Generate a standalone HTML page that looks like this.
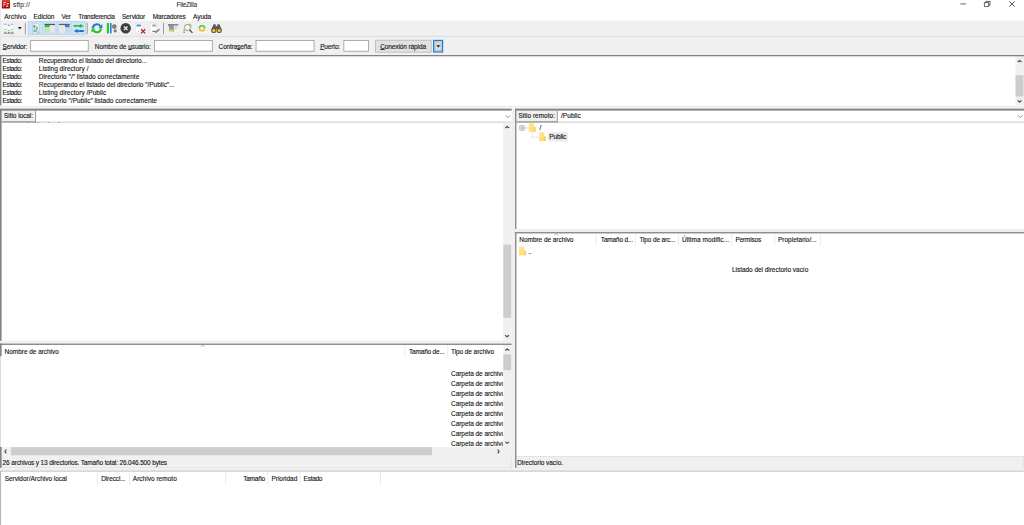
<!DOCTYPE html>
<html><head><meta charset="utf-8"><title>FileZilla</title>
<style>
*{margin:0;padding:0;box-sizing:border-box}
html,body{width:1024px;height:525px;overflow:hidden;background:#fff}
body{position:relative;font-family:"Liberation Sans",sans-serif;font-size:6.5px;color:#111;line-height:8px}
.a{position:absolute}
.t{position:absolute;white-space:nowrap;height:8px;line-height:8px;-webkit-text-stroke:0.12px #222}
.g{background:#f0f0f0}
.w{background:#fff}
.dk{background:#828282}
.in{position:absolute;background:#fff;border:0.9px solid #a3a3a3}
.sp{position:absolute;width:0.8px;background:#e3e3e3}
.th{background:#cdcdcd}
.ar{position:absolute;overflow:visible}
u{text-decoration:underline;text-decoration-thickness:0.45px;text-underline-offset:0.3px;text-decoration-color:#444}
svg{position:absolute;overflow:visible}
</style></head><body>
<!-- structure -->
<svg style="left:0;top:0" width="1024" height="525" viewBox="0 0 1024 525" shape-rendering="geometricPrecision">
<!-- toolbar + quickconnect background -->
<rect x="0" y="20.5" width="1024" height="35" fill="#f0f0f0"/>
<rect x="0" y="35.8" width="1024" height="0.9" fill="#dadada"/>
<rect x="0" y="0" width="0.8" height="55" fill="#e6e6e6"/>
<!-- quickconnect inputs -->
<rect x="30.2" y="40" width="58.5" height="11.7" fill="#a3a3a3"/>
<rect x="31.1" y="40.9" width="56.7" height="9.9" fill="#fff"/>
<rect x="154" y="40" width="58.8" height="11.7" fill="#a3a3a3"/>
<rect x="154.9" y="40.9" width="57" height="9.9" fill="#fff"/>
<rect x="255.6" y="40" width="58.9" height="11.7" fill="#a3a3a3"/>
<rect x="256.5" y="40.9" width="57.1" height="9.9" fill="#fff"/>
<rect x="343.4" y="40" width="25.5" height="11.7" fill="#a3a3a3"/>
<rect x="344.3" y="40.9" width="23.7" height="9.9" fill="#fff"/>
<rect x="375" y="39.8" width="56.6" height="12.8" fill="#b8b8b8"/>
<rect x="375.8" y="40.6" width="55" height="11.2" fill="#e1e1e1"/>
<rect x="433" y="39.8" width="10.2" height="12.8" fill="#1a80d9"/>
<rect x="434.2" y="41" width="7.8" height="10.4" fill="#dcdcdc"/>
<rect x="435" y="41.8" width="6.2" height="8.8" fill="none" stroke="#666" stroke-width="0.5" stroke-dasharray="0.6 0.6"/>
<path d="M436.3 45.2H440.3L438.3 47.4Z" fill="#222"/>
<!-- log pane -->
<rect x="1015.5" y="56.3" width="8.5" height="49.1" fill="#f0f0f0"/>
<rect x="1015.5" y="75.2" width="8" height="21.3" fill="#cdcdcd"/>
<!-- splitter below log -->
<rect x="0" y="105.6" width="1024" height="3.2" fill="#f0f0f0"/>
<!-- vertical splitter between local / remote -->
<rect x="511.7" y="108.8" width="3.4" height="362.5" fill="#f0f0f0"/>
<!-- LOCAL panel -->
<rect x="0" y="109.5" width="36" height="13.1" fill="#f0f0f0"/>
<rect x="36" y="121.6" width="475.7" height="1.1" fill="#cdcdcd"/>
<!-- local tree scrollbar -->
<rect x="503.3" y="122.6" width="8.4" height="218.2" fill="#f0f0f0"/>
<rect x="503.3" y="244.7" width="7.9" height="73.1" fill="#cdcdcd"/>
<!-- splitter local tree / list -->
<rect x="0" y="340.6" width="511.7" height="3.1" fill="#f0f0f0"/>
<rect x="0" y="356.2" width="1" height="91" fill="#dedede"/>
<!-- local list header separators -->
<rect x="404.6" y="344.9" width="0.8" height="12.8" fill="#e7e7e7"/>
<rect x="447.3" y="344.9" width="0.8" height="12.8" fill="#e7e7e7"/>
<!-- local list scrollbars -->
<rect x="503.3" y="344.9" width="8.4" height="110.9" fill="#f0f0f0"/>
<rect x="503.3" y="354.3" width="7.9" height="15.9" fill="#cdcdcd"/>
<rect x="0" y="447" width="503.4" height="8.8" fill="#f0f0f0"/>
<rect x="11" y="447.2" width="421" height="8.2" fill="#cdcdcd"/>
<!-- local status bar -->
<rect x="0" y="455.8" width="511.7" height="12" fill="#f0f0f0"/>
<rect x="1.6" y="467" width="510.1" height="0.8" fill="#e2e2e2"/>
<rect x="510.9" y="455.8" width="0.8" height="12" fill="#e2e2e2"/>
<!-- REMOTE panel -->
<rect x="515.1" y="109.5" width="42.7" height="13.1" fill="#f0f0f0"/>
<rect x="557.8" y="121.6" width="466.2" height="1.1" fill="#cdcdcd"/>
<!-- remote tree selection -->
<rect x="548" y="132.3" width="19.8" height="9" fill="#e8e8e8"/>
<!-- splitter remote tree / list -->
<rect x="515.1" y="229" width="508.9" height="3.2" fill="#f0f0f0"/>
<!-- remote header separators -->
<rect x="595.7" y="233.5" width="0.8" height="12.6" fill="#e7e7e7"/>
<rect x="635.3" y="233.5" width="0.8" height="12.6" fill="#e7e7e7"/>
<rect x="678.3" y="233.5" width="0.8" height="12.6" fill="#e7e7e7"/>
<rect x="731.5" y="233.5" width="0.8" height="12.6" fill="#e7e7e7"/>
<rect x="774.4" y="233.5" width="0.8" height="12.6" fill="#e7e7e7"/>
<rect x="819.9" y="233.5" width="0.8" height="12.6" fill="#e7e7e7"/>
<!-- remote status bar -->
<rect x="516.4" y="456" width="507.6" height="12.6" fill="#e2e2e2"/>
<rect x="517.2" y="456.8" width="506" height="11" fill="#f0f0f0"/>
<!-- band under panels -->
<rect x="0" y="467.8" width="1024" height="3.8" fill="#f0f0f0"/>
<rect x="0" y="470.6" width="1024" height="1" fill="#c0c5cb"/>
<!-- queue -->
<rect x="0" y="471.4" width="1.1" height="54" fill="#b4b7ba"/>
<rect x="97.2" y="472" width="0.8" height="13" fill="#e7e7e7"/>
<rect x="129.3" y="472" width="0.8" height="13" fill="#e7e7e7"/>
<rect x="225.3" y="472" width="0.8" height="13" fill="#e7e7e7"/>
<rect x="267.5" y="472" width="0.8" height="13" fill="#e7e7e7"/>
<rect x="299.6" y="472" width="0.8" height="13" fill="#e7e7e7"/>
<rect x="380" y="472" width="0.8" height="13" fill="#e7e7e7"/>
<!-- dark border lines (drawn last) -->
<rect x="0" y="55" width="1024" height="1.3" fill="#828282"/>
<rect x="0" y="55" width="1.4" height="50.4" fill="#828282"/>
<rect x="0" y="108.7" width="511.7" height="1.9" fill="#828282"/>
<rect x="0" y="108.8" width="1.6" height="232" fill="#828282"/>
<rect x="35" y="110.5" width="1" height="12.1" fill="#9e9e9e"/>
<rect x="1.6" y="121.3" width="34.4" height="1.3" fill="#8e8e8e"/>
<rect x="0" y="343.6" width="511.7" height="1.3" fill="#828282"/>
<rect x="0" y="343.6" width="1.6" height="12.6" fill="#828282"/>
<rect x="0" y="447" width="1.6" height="20.8" fill="#828282"/>
<rect x="515.1" y="108.7" width="508.9" height="1.9" fill="#828282"/>
<rect x="515.1" y="108.8" width="1.3" height="120.2" fill="#828282"/>
<rect x="556.8" y="110.5" width="1" height="12.1" fill="#9e9e9e"/>
<rect x="516.4" y="121.3" width="41.4" height="1.3" fill="#8e8e8e"/>
<rect x="515.1" y="232.1" width="508.9" height="1.3" fill="#828282"/>
<rect x="515.1" y="232.1" width="1.3" height="235.7" fill="#828282"/>
<!-- tiny ticks under local combo -->
<rect x="27.5" y="122.1" width="1.6" height="0.7" fill="#8a8a8a"/>
<rect x="37.6" y="122.1" width="1.6" height="0.7" fill="#8a8a8a"/>
<rect x="47.8" y="122.1" width="1.6" height="0.7" fill="#8a8a8a"/>
<rect x="58" y="122.1" width="1.6" height="0.7" fill="#8a8a8a"/>
</svg>
<!-- icons overlay -->
<svg style="left:0;top:0" width="1024" height="525" viewBox="0 0 1024 525" font-family="Liberation Sans, sans-serif">
<defs>
<linearGradient id="fzg" x1="0" y1="0" x2="0" y2="1"><stop offset="0" stop-color="#d04a4a"/><stop offset="0.45" stop-color="#bb1111"/><stop offset="1" stop-color="#a80000"/></linearGradient>
<linearGradient id="fold" x1="0" y1="0" x2="1" y2="1"><stop offset="0" stop-color="#ffe9a3"/><stop offset="1" stop-color="#ffd75e"/></linearGradient>
</defs>
<!-- title icon -->
<rect x="1.8" y="0" width="8.2" height="8.4" rx="0.6" fill="url(#fzg)"/>
<text x="3.1" y="7.1" font-size="7.2" font-style="italic" fill="#fff" textLength="5.8" lengthAdjust="spacingAndGlyphs">Fz</text>
<!-- window controls -->
<g stroke="#333" stroke-width="0.75" fill="none">
<path d="M960.4 3.9H966"/>
<path d="M984.4 2.6H988.6V6.5H984.4Z"/><path d="M985.8 2.6V1.4H990V5.2H988.6"/>
<path d="M1009.3 1.3L1014.6 6.6M1014.6 1.3L1009.3 6.6" stroke-width="0.85"/>
</g>

<!-- toolbar: site manager -->
<g>
<g stroke="#dcdcdc" stroke-width="0.3"><rect x="3.9" y="23.5" width="3.1" height="8" fill="#fff"/><rect x="7.3" y="24.3" width="3.1" height="8" fill="#fff"/><rect x="10.7" y="23.5" width="3.1" height="8" fill="#fff"/></g>
<rect x="4.4" y="23.7" width="2.1" height="1.4" rx="0.5" fill="#7db5ea"/><rect x="7.8" y="24.7" width="2.1" height="1.4" rx="0.5" fill="#5a9fe0"/><rect x="11.2" y="23.7" width="2.1" height="1.4" rx="0.5" fill="#7db5ea"/>
<rect x="4.3" y="28.9" width="2.3" height="1" fill="#86cf86"/><rect x="7.7" y="29.9" width="2.3" height="1" fill="#86cf86"/><rect x="11.1" y="28.9" width="2.3" height="1" fill="#86cf86"/>
<path d="M3.9 33.4L5.45 30.9L7 33.4ZM7.3 33.4L8.85 31.3L10.4 33.4ZM10.7 33.4L12.25 30.9L13.8 33.4Z" fill="#8e8e8e"/>
<path d="M3.6 33.4H14.1" stroke="#8a8a8a" stroke-width="0.6" fill="none"/>
</g>
<path d="M17.8 27.1H21.8L19.8 29.5Z" fill="#2a2a2a"/>
<!-- separators -->
<g stroke="#707070" stroke-width="0.65">
<path d="M25.3 22.8V34.2"/><path d="M87.25 22.8V34.2"/><path d="M163.5 22.8V34.2"/>
</g>
<!-- toggle group -->
<rect x="28" y="21.2" width="57.9" height="13.6" fill="#cbe3f7"/>
<g stroke="#b4d6f4" stroke-width="0.7" fill="none">
<rect x="28.2" y="21.4" width="57.5" height="13.2"/><path d="M42.4 21.4V34.6M56.8 21.4V34.6M71.2 21.4V34.6"/>
</g>
<!-- toggle 1: log doc -->
<g>
<path d="M32.5 23.7H37.3L39.2 25.6V33H32.5Z" fill="#f2f4f5" stroke="#b3babf" stroke-width="0.5"/>
<rect x="33.3" y="25.2" width="2" height="2.4" fill="#4f9be0"/>
<rect x="33.2" y="30.3" width="3.6" height="1.3" fill="#3f8edc"/>
<path d="M35.6 26.2L38 28.4L35.6 30.2" stroke="#35c13a" stroke-width="0.9" fill="none"/>
<path d="M33.4 28.9H35.4" stroke="#35c13a" stroke-width="0.7"/>
<path d="M36.2 27.4L37.4 29.3" stroke="#8d9499" stroke-width="0.9"/>
<rect x="37.2" y="31.6" width="1.6" height="0.8" fill="#35c13a"/>
</g>
<!-- toggle 2: local tree -->
<g>
<rect x="44.6" y="24" width="10.4" height="8.7" fill="#f4f4f4" stroke="#b9bec3" stroke-width="0.4"/>
<rect x="44.6" y="23.9" width="10.4" height="1.3" fill="#555"/>
<rect x="44.8" y="25.2" width="4.9" height="2.1" fill="#1fc026"/>
<rect x="44.8" y="27.6" width="4.9" height="5" fill="#bfe6b7"/>
<rect x="50.3" y="25.4" width="4.5" height="7.2" fill="#e6e6e6"/>
</g>
<!-- toggle 3: remote tree -->
<g>
<rect x="59" y="24" width="10.6" height="8.7" fill="#f4f4f4" stroke="#b9bec3" stroke-width="0.4"/>
<rect x="59" y="23.9" width="10.6" height="1.3" fill="#5e5e5e"/>
<rect x="64.9" y="25.2" width="4.6" height="2.1" fill="#2478cf"/>
<rect x="64.9" y="27.6" width="4.6" height="5" fill="#c9d9e6"/>
<rect x="59.2" y="25.4" width="5.2" height="7.2" fill="#e8e8e8"/>
</g>
<!-- toggle 4: transfer queue arrows -->
<g>
<path d="M73.6 25H80V24.1L83.8 25.9L80 27.7V26.8H73.6Z" fill="#22c22a"/>
<path d="M83.8 30.1H77.6V29.1L73.8 31L77.6 32.9V31.9H83.8Z" fill="#1f74cc"/>
<path d="M77.5 24.4V27.3M79 30V32.4" stroke="#cbe3f7" stroke-width="0.35"/>
</g>
<!-- refresh -->
<g fill="none" stroke-width="2">
<path d="M92.7 28.1A4.2 4.2 0 0 1 100.4 26.2" stroke="#2279d3"/>
<path d="M101.1 28.5A4.2 4.2 0 0 1 93.4 30.4" stroke="#22c22a"/>
</g>
<path d="M102.3 24V28.2H98.3Z" fill="#2279d3"/>
<path d="M91.5 32.7V28.5H95.5Z" fill="#22c22a"/>
<!-- filter / directory comparison -->
<g>
<rect x="106.8" y="23" width="2.2" height="10.6" rx="0.5" fill="#2bc533"/>
<rect x="110" y="23" width="1.6" height="10.6" rx="0.5" fill="#2b7fd6"/>
<circle cx="114.3" cy="26.6" r="2.3" fill="#777"/><circle cx="114.3" cy="26.6" r="0.6" fill="#b0b0b0"/>
<circle cx="115.2" cy="30.8" r="1.6" fill="#777"/><circle cx="115.2" cy="30.8" r="0.4" fill="#b0b0b0"/>
</g>
<!-- cancel -->
<circle cx="125.7" cy="28.3" r="5.2" fill="#3e3e3e"/>
<path d="M123.9 26.5L127.5 30.1M127.5 26.5L123.9 30.1" stroke="#f4f4f4" stroke-width="1.25"/>
<!-- disconnect -->
<g>
<rect x="135.3" y="23.5" width="6.6" height="9.5" fill="#fdfdfd" stroke="#d6d6d6" stroke-width="0.4"/>
<rect x="136.5" y="24.5" width="4.4" height="2.1" rx="0.3" fill="#4b93dd"/>
<rect x="138.4" y="30.9" width="0.8" height="0.8" fill="#777"/>
<path d="M141 29.3L145.2 33.4M145.2 29.3L141 33.4" stroke="#b81c26" stroke-width="1.3"/>
</g>
<!-- reconnect (disabled) -->
<g>
<rect x="150" y="23.5" width="6.6" height="9.5" fill="#fcfcfc" stroke="#d6d6d6" stroke-width="0.4"/>
<rect x="152.2" y="24.4" width="3.8" height="2" rx="0.3" fill="#a4a4a4"/>
<path d="M152.4 31.4H155L155.8 32.3L159.5 29.2" stroke="#7a7a7a" stroke-width="1.4" fill="none"/>
</g>
<!-- filter dialog -->
<g opacity="0.92">
<rect x="168" y="24.3" width="10.3" height="1.3" fill="#4a4a4a"/>
<rect x="169" y="25.6" width="4.2" height="1.5" fill="#5b9be0"/>
<rect x="169" y="27.1" width="4.2" height="1.4" fill="#d9534f"/>
<rect x="169" y="28.5" width="4.2" height="1.5" fill="#5cb85c"/>
<rect x="169" y="30" width="4.2" height="1.9" fill="#f0d060"/>
<rect x="173.6" y="25.6" width="4.4" height="6.3" fill="#f8f8f8"/>
<rect x="173.8" y="25.8" width="4" height="1.6" fill="#b9d8f3"/>
<rect x="173.8" y="28.4" width="3.2" height="0.8" fill="#6fcf6f"/>
<path d="M173.4 25.4V32" stroke="#666" stroke-width="0.5"/>
</g>
<!-- search -->
<g>
<circle cx="187.4" cy="27.5" r="3.1" fill="#f5f5f5" stroke="#858585" stroke-width="0.8"/>
<path d="M189.6 29.9L192.4 32.8" stroke="#3c3c3c" stroke-width="1.2"/>
<rect x="189.2" y="23.8" width="1.5" height="1" fill="#e0564e"/><rect x="190.4" y="24.8" width="1.5" height="1.2" fill="#f2c94c"/><rect x="190.6" y="26" width="1" height="1" fill="#6fcf6f"/>
<rect x="183.2" y="29" width="1.4" height="1.2" fill="#f2c94c"/><rect x="183.4" y="30.2" width="1.4" height="1.2" fill="#6fcf6f"/><rect x="183.4" y="31.8" width="1.6" height="1" fill="#e0564e"/>
</g>
<!-- sync browse -->
<g>
<rect x="197.8" y="23.4" width="9" height="10" fill="#fafafa" stroke="#dedede" stroke-width="0.3"/>
<path d="M199.4 28.2A2.6 2.6 0 0 1 204.6 28.2" stroke="#4fce58" stroke-width="1.8" fill="none"/>
<path d="M204.6 28.2A2.6 2.6 0 0 1 199.4 28.2" stroke="#f3c032" stroke-width="1.8" fill="none"/>
<circle cx="202" cy="28.2" r="1.3" fill="#ececec"/>
</g>
<!-- binoculars -->
<g>
<path d="M213.6 24.2H215.6L216.3 30H211.1Z" fill="#5a5a5a"/>
<path d="M217.4 24.2H219.4L221.9 30H216.7Z" fill="#5a5a5a"/>
<rect x="215.4" y="26" width="2.2" height="3" fill="#5e5e5e"/>
<circle cx="213.8" cy="30.4" r="2.6" fill="#5a5a5a"/><circle cx="219.2" cy="30.4" r="2.6" fill="#5a5a5a"/>
<circle cx="213.8" cy="30.6" r="1.6" fill="#f6c40c"/><circle cx="219.2" cy="30.6" r="1.6" fill="#f6c40c"/>
</g>

<!-- chevrons / arrows -->
<path d="M1017.70 61.95L1019.60 60.45L1021.50 61.95" stroke="#484848" stroke-width="1.1" fill="none"/>
<path d="M1017.70 100.45L1019.60 101.95L1021.50 100.45" stroke="#484848" stroke-width="1.1" fill="none"/>
<path d="M505.60 115.30L508.00 117.70L510.40 115.30" stroke="#8c8c8c" stroke-width="0.9" fill="none"/>
<path d="M1018.00 115.30L1020.40 117.70L1022.80 115.30" stroke="#8c8c8c" stroke-width="0.9" fill="none"/>
<path d="M505.30 127.95L507.20 126.45L509.10 127.95" stroke="#484848" stroke-width="1.1" fill="none"/>
<path d="M505.20 335.25L507.10 336.75L509.00 335.25" stroke="#484848" stroke-width="1.1" fill="none"/>
<path d="M505.30 350.55L507.20 349.05L509.10 350.55" stroke="#484848" stroke-width="1.1" fill="none"/>
<path d="M505.30 441.85L507.20 443.35L509.10 441.85" stroke="#484848" stroke-width="1.1" fill="none"/>
<path d="M6.35 449.50L4.85 451.40L6.35 453.30" stroke="#484848" stroke-width="1.1" fill="none"/>
<path d="M497.65 449.50L499.15 451.40L497.65 453.30" stroke="#484848" stroke-width="1.1" fill="none"/>
<path d="M200.70 346.70L202.80 345.10L204.90 346.70" stroke="#8e8e8e" stroke-width="0.6" fill="none"/>
<path d="M554.20 235.40L556.30 233.80L558.40 235.40" stroke="#8e8e8e" stroke-width="0.6" fill="none"/>
<!-- remote tree -->
<rect x="519.6" y="125.6" width="4.8" height="4.8" rx="0.8" fill="#dfe3e8" stroke="#a9a9a9" stroke-width="0.7"/><path d="M520.9 128H523.1" stroke="#5b7fc4" stroke-width="0.7"/>
<path d="M524.8 128H528.8" stroke="#c8c8c8" stroke-width="0.6"/>
<path d="M532.3 132V137.2H538.6" stroke="#9c9c9c" stroke-width="0.6" stroke-dasharray="0.6 0.7" fill="none"/>
<path d="M528.80 122.90H534.04V126.86L535.70 127.30V131.70H528.80Z" fill="url(#fold)"/><path d="M534.04 126.86L535.70 127.30V131.70H534.04Z" fill="#f2cc60" opacity="0.75"/>
<path d="M538.80 132.20H544.04V136.16L545.70 136.60V141.00H538.80Z" fill="url(#fold)"/><path d="M544.04 136.16L545.70 136.60V141.00H544.04Z" fill="#f2cc60" opacity="0.75"/>
<path d="M518.90 246.50H524.37V250.46L526.10 250.90V255.30H518.90Z" fill="url(#fold)"/><path d="M524.37 250.46L526.10 250.90V255.30H524.37Z" fill="#f2cc60" opacity="0.75"/>
</svg>

<!-- texts -->
<div id="tx" class="a" style="left:0;top:0;width:1024px;height:525px">
<div class="t" style="left:13.0px;top:1.2px;letter-spacing:0.156px;-webkit-text-stroke:0.04px #333;color:#222;">sftp://</div>
<div class="t" style="left:176.4px;top:1.2px;letter-spacing:-0.201px;-webkit-text-stroke:0.04px #333;color:#222;">FileZilla</div>
<div class="t" style="left:4.2px;top:13.1px;letter-spacing:0.073px;">Archivo</div>
<div class="t" style="left:33.6px;top:13.1px;letter-spacing:-0.075px;">Edición</div>
<div class="t" style="left:61.6px;top:13.1px;letter-spacing:-0.255px;">Ver</div>
<div class="t" style="left:78.3px;top:13.1px;letter-spacing:-0.238px;">Transferencia</div>
<div class="t" style="left:121.9px;top:13.1px;letter-spacing:-0.115px;">Servidor</div>
<div class="t" style="left:152.7px;top:13.1px;letter-spacing:-0.143px;">Marcadores</div>
<div class="t" style="left:193.0px;top:13.1px;letter-spacing:-0.026px;">Ayuda</div>
<div class="t" style="left:2.6px;top:43.0px;letter-spacing:-0.159px;"><u>S</u>ervidor:</div>
<div class="t" style="left:94.8px;top:43.0px;letter-spacing:-0.062px;">Nombre de <u>u</u>suario:</div>
<div class="t" style="left:218.6px;top:43.0px;letter-spacing:-0.157px;">Contra<u>s</u>eña:</div>
<div class="t" style="left:320.2px;top:43.0px;letter-spacing:-0.167px;"><u>P</u>uerto:</div>
<div class="t" style="left:380.2px;top:43.0px;letter-spacing:-0.104px;"><u>C</u>onexión rápida</div>
<div class="t" style="left:2.6px;top:56.5px;letter-spacing:-0.378px;">Estado:</div>
<div class="t" style="left:38.8px;top:56.5px;letter-spacing:-0.076px;">Recuperando el listado del directorio...</div>
<div class="t" style="left:2.6px;top:64.5px;letter-spacing:-0.378px;">Estado:</div>
<div class="t" style="left:38.8px;top:64.5px;letter-spacing:0.029px;">Listing directory /</div>
<div class="t" style="left:2.6px;top:72.5px;letter-spacing:-0.378px;">Estado:</div>
<div class="t" style="left:38.8px;top:72.5px;letter-spacing:0.014px;">Directorio "/" listado correctamente</div>
<div class="t" style="left:2.6px;top:80.5px;letter-spacing:-0.378px;">Estado:</div>
<div class="t" style="left:38.8px;top:80.5px;letter-spacing:-0.023px;">Recuperando el listado del directorio "/Public"...</div>
<div class="t" style="left:2.6px;top:88.5px;letter-spacing:-0.378px;">Estado:</div>
<div class="t" style="left:38.8px;top:88.5px;letter-spacing:0.022px;">Listing directory /Public</div>
<div class="t" style="left:2.6px;top:96.5px;letter-spacing:-0.378px;">Estado:</div>
<div class="t" style="left:38.8px;top:96.5px;letter-spacing:0.012px;">Directorio "/Public" listado correctamente</div>
<div class="t" style="left:4.0px;top:112.2px;letter-spacing:-0.052px;">Sitio local:</div>
<div class="t" style="left:518.4px;top:112.2px;letter-spacing:0.008px;">Sitio remoto:</div>
<div class="t" style="left:561.0px;top:112.2px;letter-spacing:0.041px;">/Public</div>
<div class="t" style="left:539.6px;top:123.6px;">/</div>
<div class="t" style="left:549.3px;top:132.9px;letter-spacing:-0.136px;">Public</div>
<div class="t" style="left:519.3px;top:235.9px;letter-spacing:-0.048px;">Nombre de archivo</div>
<div class="t" style="left:600.8px;top:235.9px;letter-spacing:-0.170px;">Tamaño d...</div>
<div class="t" style="left:639.5px;top:235.9px;letter-spacing:-0.150px;">Tipo de arc...</div>
<div class="t" style="left:682.0px;top:235.9px;letter-spacing:0.057px;">Última modific...</div>
<div class="t" style="left:735.6px;top:235.9px;letter-spacing:-0.212px;">Permisos</div>
<div class="t" style="left:778.0px;top:235.9px;">Propietario/...</div>
<div class="t" style="left:528.3px;top:247.7px;letter-spacing:-0.462px;">..</div>
<div class="t" style="left:732.0px;top:265.6px;letter-spacing:-0.040px;">Listado del directorio vacío</div>
<div class="t" style="left:4.6px;top:348.2px;letter-spacing:-0.042px;">Nombre de archivo</div>
<div class="t" style="left:409.0px;top:348.2px;letter-spacing:-0.190px;">Tamaño de...</div>
<div class="t" style="left:451.0px;top:348.2px;letter-spacing:-0.080px;">Tipo de archivo</div>
<div class="t" style="left:2.6px;top:459.1px;letter-spacing:-0.149px;">26 archivos y 13 directorios. Tamaño total: 26.046.500 bytes</div>
<div class="t" style="left:517.2px;top:459.1px;letter-spacing:-0.069px;">Directorio vacío.</div>
<div class="t" style="left:4.7px;top:474.9px;letter-spacing:-0.025px;">Servidor/Archivo local</div>
<div class="t" style="left:101.2px;top:474.9px;letter-spacing:-0.118px;">Direcci...</div>
<div class="t" style="left:132.8px;top:474.9px;letter-spacing:0.020px;">Archivo remoto</div>
<div class="t" style="left:243.2px;top:474.9px;letter-spacing:-0.221px;">Tamaño</div>
<div class="t" style="left:271.5px;top:474.9px;letter-spacing:-0.024px;">Prioridad</div>
<div class="t" style="left:303.6px;top:474.9px;letter-spacing:-0.275px;">Estado</div>
<div class="a" style="left:447.5px;top:358.0px;width:55.8px;height:89.0px;overflow:hidden">
<div class="t" style="left:3.5px;top:11.6px;letter-spacing:-0.051px;">Carpeta de archivos</div>
<div class="t" style="left:3.5px;top:21.6px;letter-spacing:-0.051px;">Carpeta de archivos</div>
<div class="t" style="left:3.5px;top:31.7px;letter-spacing:-0.051px;">Carpeta de archivos</div>
<div class="t" style="left:3.5px;top:41.7px;letter-spacing:-0.051px;">Carpeta de archivos</div>
<div class="t" style="left:3.5px;top:51.8px;letter-spacing:-0.051px;">Carpeta de archivos</div>
<div class="t" style="left:3.5px;top:61.8px;letter-spacing:-0.051px;">Carpeta de archivos</div>
<div class="t" style="left:3.5px;top:71.9px;letter-spacing:-0.051px;">Carpeta de archivos</div>
<div class="t" style="left:3.5px;top:81.9px;letter-spacing:-0.051px;">Carpeta de archivos</div>
</div>
</div>
</body></html>
